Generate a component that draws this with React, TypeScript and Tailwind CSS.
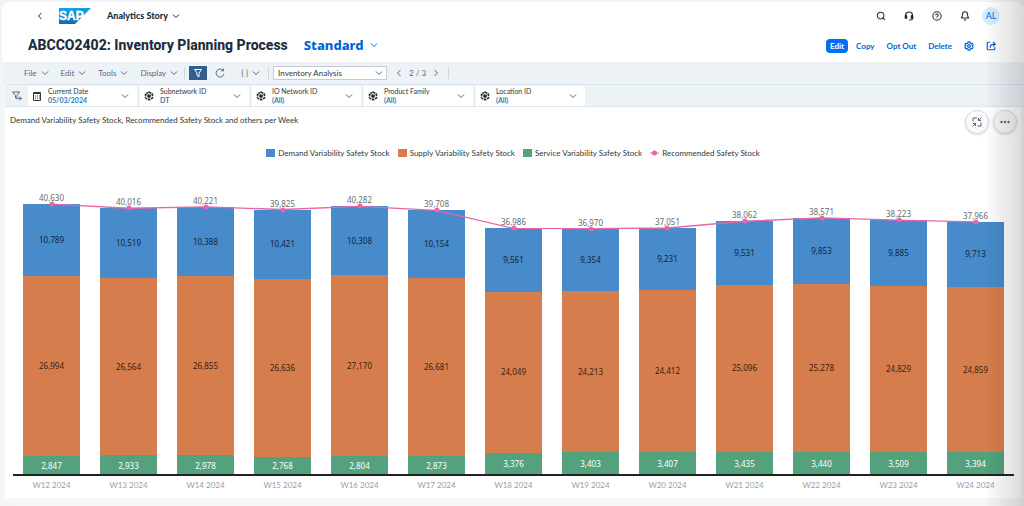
import React, { useState } from 'react';
import { FiSearch, FiBell, FiHelpCircle } from 'react-icons/fi';
import { clsx } from 'clsx';

const weeks = [
  { week: 'W12 2024', demand: 10789, supply: 26994, service: 2847, recommended: 40630 },
  { week: 'W13 2024', demand: 10519, supply: 26564, service: 2933, recommended: 40016 },
  { week: 'W14 2024', demand: 10388, supply: 26855, service: 2978, recommended: 40221 },
  { week: 'W15 2024', demand: 10421, supply: 26636, service: 2768, recommended: 39825 },
  { week: 'W16 2024', demand: 10308, supply: 27170, service: 2804, recommended: 40282 },
  { week: 'W17 2024', demand: 10154, supply: 26681, service: 2873, recommended: 39708 },
  { week: 'W18 2024', demand: 9561, supply: 24049, service: 3376, recommended: 36986 },
  { week: 'W19 2024', demand: 9354, supply: 24213, service: 3403, recommended: 36970 },
  { week: 'W20 2024', demand: 9231, supply: 24412, service: 3407, recommended: 37051 },
  { week: 'W21 2024', demand: 9531, supply: 25096, service: 3435, recommended: 38062 },
  { week: 'W22 2024', demand: 9853, supply: 25278, service: 3440, recommended: 38571 },
  { week: 'W23 2024', demand: 9885, supply: 24829, service: 3509, recommended: 38223 },
  { week: 'W24 2024', demand: 9713, supply: 24859, service: 3394, recommended: 37966 },
];

const filters = [
  { label: 'Current Date', value: '05/03/2024', type: 'date' },
  { label: 'Subnetwork ID', value: 'DT', type: 'dimension' },
  { label: 'IO Network ID', value: '(All)', type: 'dimension' },
  { label: 'Product Family', value: '(All)', type: 'dimension' },
  { label: 'Location ID', value: '(All)', type: 'dimension' },
];

const legend = [
  { label: 'Demand Variability Safety Stock', color: 'bg-[#478bcb]' },
  { label: 'Supply Variability Safety Stock', color: 'bg-[#d67d4e]' },
  { label: 'Service Variability Safety Stock', color: 'bg-[#53a27d]' },
];

const AXIS_MAX = 45150;
const percent = (n: number) => (n / AXIS_MAX) * 100;
const format = (n: number) => n.toLocaleString('en-US');

type IconProps = { className?: string };

const Chevron: React.FC<IconProps> = ({ className }) => (
  <svg viewBox="0 0 8 8" className={clsx('shrink-0 fill-none stroke-current', className)} aria-hidden="true">
    <path d="M1 2.5 4 5.5 7 2.5" />
  </svg>
);

const SapLogo = () => (
  <svg viewBox="0 0 32 16" className="h-4 w-8" role="img" aria-label="SAP">
    <defs>
      <linearGradient id="sap" x1="0" y1="0" x2="0" y2="1">
        <stop offset="0" stopColor="#12a5e6" />
        <stop offset="1" stopColor="#1268bd" />
      </linearGradient>
    </defs>
    <path d="M0 0h32L16 16H0z" fill="url(#sap)" />
    <text x="0" y="12" fontSize="12" fontWeight="700" fill="#fff" stroke="#fff" strokeWidth=".4" fontFamily="Liberation Sans, sans-serif">
      SAP
    </text>
  </svg>
);

const HeadsetIcon = () => (
  <svg viewBox="0 0 10 10" className="size-[10px] fill-none stroke-current stroke-[1.2]" aria-hidden="true">
    <path d="M1.500 6V4.500a3.500 3.500 0 0 1 7 0V7.500Q8.500 9 6.500 9H5" />
    <path d="M1 4.500h2v3H1zM7 4.500h2v3H7z" className="fill-current" strokeWidth=".6" />
  </svg>
);

const GearIcon = () => (
  <svg viewBox="0 0 12 12" className="size-[10px] fill-none stroke-current stroke-[1.4]" aria-hidden="true">
    <path d="M5 1h2l.4 1.400 1.300.7L10 2.800l1 1.800-1 1v.8l1 1-1 1.800-1.300-.3-1.300.7L7 11H5l-.4-1.400-1.300-.7L2 9.200 1 7.400l1-1v-.8l-1-1 1-1.800 1.300.3 1.300-.7z" />
    <circle cx="6" cy="6" r="1.7" />
  </svg>
);

const ShareIcon = () => (
  <svg viewBox="0 0 12 12" className="size-[10px] fill-none stroke-current stroke-[1.4]" aria-hidden="true">
    <path d="M5 1.500H2.500a1 1 0 0 0-1 1v7a1 1 0 0 0 1 1h7a1 1 0 0 0 1-1V7.500" />
    <path d="M5 8c0-2.500 1.500-4 3.500-4H11M8.500 1.200 11.200 4 8.500 6.500" />
  </svg>
);

const FunnelIcon = () => (
  <svg viewBox="0 0 10 10" className="size-[10px] fill-none stroke-current" aria-hidden="true">
    <path d="M1.500 1.500h7L6 5v4L4 7.500V5z" />
  </svg>
);

const AddFilterIcon = () => (
  <svg viewBox="0 0 10 10" className="size-[10px] fill-none stroke-current" aria-hidden="true">
    <path d="M.5 1h7L5 4.500V8L3.500 7V4.500zM8 5.500v4M6 7.500h4" />
  </svg>
);

const RefreshIcon = () => (
  <svg viewBox="0 0 10 10" className="size-[10px] fill-none stroke-current" aria-hidden="true">
    <path d="M8 2.300A4 4 0 1 0 9 6M8.500.5v2.300H6" />
  </svg>
);

const CalendarIcon = () => (
  <svg viewBox="0 0 10 10" className="size-[10px] fill-none stroke-current" aria-hidden="true">
    <path d="M1.500 1.500h7v8h-7zM1 2.500h8" />
    <path d="M3 5h5M3 7.200h5" strokeDasharray="1 1" />
  </svg>
);

const DimensionIcon = () => (
  <svg viewBox="0 0 10 10" className="size-[10px] fill-none stroke-current" aria-hidden="true">
    <path d="M5 1 8.500 3v4L5 9 1.500 7V3z" strokeWidth="1.500" strokeDasharray="2.800 .7" />
    <path d="M5 3.200 6.700 4.200v1.800L5 7 3.300 6V4.200z" className="fill-current" strokeWidth=".3" />
    <path d="M5 5v4M5 5 1.500 3M5 5l3.500-2" strokeWidth=".7" />
  </svg>
);

const CollapseIcon = () => (
  <svg viewBox="0 0 10 10" className="size-[10px] fill-none stroke-current" aria-hidden="true">
    <path d="M5 1H1v3.500M9 5.500V9H5.500M9.500.5 6.500 3.500M6.500 1v2.500H9M.5 9.500l3-3M1 6.500h2.500V9" />
  </svg>
);

const Separator = () => <span className="h-3 w-px bg-[#cfd6dd]" />;

const App: React.FC = () => {
  const [page, setPage] = useState('Inventory Analysis');

  return (
    <div className="relative bg-[#f3f4f6] pt-[2px] pl-[2px] font-[Lato,sans-serif] text-[#32363a]">
      <div className="overflow-hidden rounded-lg bg-[#f4f6f8]">
        {/* Shell header */}
        <header className="bg-white pr-6 pl-[26px]">
          <div className="flex h-7 items-center">
            <button aria-label="Back" className="flex size-6 items-center justify-center text-[#1d2d3e]">
              <Chevron className="size-2 rotate-90" />
            </button>
            <span className="ml-[7px]">
              <SapLogo />
            </span>
            <button className="ml-4 flex items-center gap-1 text-[9px] font-black text-[#1d2d3e]">
              Analytics Story
              <Chevron className="size-2" />
            </button>
            <div className="ml-auto flex items-center gap-[18px] text-[#1d2d3e]">
              <button aria-label="Search"><FiSearch className="size-[10px]" strokeWidth={2.5} /></button>
              <button aria-label="Support"><HeadsetIcon /></button>
              <button aria-label="Help"><FiHelpCircle className="size-[10px]" strokeWidth={2.5} /></button>
              <button aria-label="Notifications"><FiBell className="size-[10px]" strokeWidth={2.5} /></button>
            </div>
            <button className="ml-3 size-[18px] rounded-full bg-[#d1efff] text-[9px] text-[#0064d9]">AL</button>
          </div>

          <div className="flex h-8 items-center">
            <div className="flex items-center gap-4 pb-[3px] leading-5 font-extrabold">
              <h1 className="font-[Roboto,sans-serif] text-[14px] text-[#1d2d3e]">ABCCO2402: Inventory Planning Process</h1>
              <button className="flex items-center gap-[6px] font-['Noto_Sans',sans-serif] text-[13px] text-[#0064d9]">
                Standard
                <Chevron className="size-2" />
              </button>
            </div>
            <div className="ml-auto flex items-center text-[8px] font-bold text-[#0064d9]">
              <button className="h-[14px] w-[22px] rounded bg-[#0070f2] text-white">Edit</button>
              <button className="ml-2">Copy</button>
              <button className="ml-3">Opt Out</button>
              <button className="ml-3">Delete</button>
              <button className="ml-3" aria-label="Settings"><GearIcon /></button>
              <button className="mr-1 ml-3" aria-label="Share"><ShareIcon /></button>
            </div>
          </div>
        </header>

        {/* Toolbar */}
        <div className="flex h-[22px] items-center bg-[#edf2f7] pl-[22px] text-[8px] text-[#556b82]">
          <div className="flex gap-3">
            {['File', 'Edit', 'Tools', 'Display'].map((item) => (
              <button key={item} className="flex items-center gap-1">
                {item}
                <Chevron className="size-2" />
              </button>
            ))}
          </div>
          <div className="ml-[6px] flex items-center gap-1">
            <Separator />
            <button aria-label="Filters" className="flex h-[14px] w-[18px] items-center justify-center bg-[#2f5f8a] text-white">
              <FunnelIcon />
            </button>
          </div>
          <button className="ml-2" aria-label="Refresh"><RefreshIcon /></button>
          <button className="mr-2 ml-4 flex items-center gap-1" aria-label="Scripts">
            {'{ }'}
            <Chevron className="size-2" />
          </button>
          <Separator />
          <div className="relative ml-1 w-[114px]">
            <select
              aria-label="Page"
              className="block h-[14px] w-full appearance-none border border-[#c5ccd3] bg-white pl-1 text-[8px] leading-3 text-[#32363a]"
              value={page}
              onChange={(e) => setPage(e.target.value)}
            >
              <option>Inventory Analysis</option>
            </select>
            <Chevron className="pointer-events-none absolute top-[3px] right-1 size-2" />
          </div>
          <button className="ml-2" aria-label="Previous page"><Chevron className="size-2 rotate-90" /></button>
          <span className="mx-[6px]">2 / 3</span>
          <button className="mr-2" aria-label="Next page"><Chevron className="size-2 -rotate-90" /></button>
          <Separator />
        </div>

        {/* Filter bar */}
        <div className="ml-[3px] flex h-[23px] items-center gap-[3px] border-y border-[#dce6f0] bg-[#edf2f7] text-[#556b82]">
          <button aria-label="Add filter" className="flex w-5 justify-center pl-1"><AddFilterIcon /></button>
          {filters.map((filter) => (
            <button key={filter.label} className="flex h-5 w-[109px] items-center bg-white px-1 text-left">
              <span className="text-[#32363a]">
                {filter.type === 'date' ? <CalendarIcon /> : <DimensionIcon />}
              </span>
              <span className="ml-[6px] flex-1 text-[7px] leading-[9px]">
                <span className="block text-[#32363a]">{filter.label}</span>
                <span className="block font-bold text-[#2f7ab5]">{filter.value}</span>
              </span>
              <Chevron className="mr-1 size-2" />
            </button>
          ))}
        </div>

        {/* Chart */}
        <main className="mr-[3px] mb-2 ml-[3px] bg-white px-1 pb-[5px]">
          <div className="flex h-8 items-start justify-between">
            <h2 className="pt-[7px] pl-px text-[8px] leading-3">
              Demand Variability Safety Stock, Recommended Safety Stock and others per Week
            </h2>
            <div className="flex gap-1 pt-[3px] text-[#556b82]">
              <button aria-label="Collapse" className="flex size-6 items-center justify-center rounded-full border border-[#d9d9d9] bg-[#fafafa] shadow-sm">
                <CollapseIcon />
              </button>
              <button aria-label="More" className="flex size-6 items-center justify-center rounded-full border border-[#d9d9d9] bg-[#f5f5f5] shadow-sm">
                <svg viewBox="0 0 10 4" className="h-1 w-[10px] fill-current">
                  <circle cx="1.5" cy="2" r="1.2" />
                  <circle cx="5" cy="2" r="1.2" />
                  <circle cx="8.5" cy="2" r="1.2" />
                </svg>
              </button>
            </div>
          </div>

          <div className="mt-2 flex h-3 items-center justify-center gap-2 text-[8px]">
            {legend.map((item) => (
              <div key={item.label} className="flex items-center gap-[3px]">
                <span className={clsx('h-2 w-[9px]', item.color)} />
                {item.label}
              </div>
            ))}
            <div className="flex items-center gap-[3px]">
              <svg viewBox="0 0 9 6" className="h-[6px] w-[9px] fill-[#e865ac]">
                <path d="M0 2.500h9v1H0z" />
                <circle cx="4.5" cy="3" r="2.500" />
              </svg>
              Recommended Safety Stock
            </div>
          </div>

          <div className="relative mt-[15px] mr-[3px] ml-1 grid h-[301px] grid-cols-13 font-['Noto_Sans',sans-serif] text-[8px] leading-none">
            {weeks.map((w) => (
              <div key={w.week} className="flex h-full flex-col items-center justify-end">
                <div className="flex w-3/4 items-center justify-center bg-[#478bcb] text-[#12263a]" style={{ height: `${percent(w.demand)}%` }}>
                  {format(w.demand)}
                </div>
                <div className="flex w-3/4 items-center justify-center bg-[#d67d4e] text-[#3a1f10]" style={{ height: `${percent(w.supply)}%` }}>
                  {format(w.supply)}
                </div>
                <div className="flex w-3/4 items-center justify-center bg-[#53a27d] pt-px text-white" style={{ height: `${percent(w.service)}%` }}>
                  {format(w.service)}
                </div>
              </div>
            ))}
            {weeks.map((w, i) => (
              <span
                key={w.week}
                className="absolute -translate-x-1/2 pb-[2px] text-[#6a6d70]"
                style={{ left: `${((i + 0.5) / weeks.length) * 100}%`, bottom: `${percent(w.recommended)}%` }}
              >
                {format(w.recommended)}
              </span>
            ))}
            <svg
              viewBox={`0 0 ${weeks.length} ${AXIS_MAX}`}
              preserveAspectRatio="none"
              className="absolute inset-0 size-full fill-none stroke-[#e865ac]"
            >
              <polyline
                points={weeks.map((w, i) => `${i + 0.5},${AXIS_MAX - w.recommended}`).join(' ')}
                strokeWidth="1.3"
                vectorEffect="non-scaling-stroke"
              />
            </svg>
            {weeks.map((w, i) => (
              <span
                key={w.week}
                className="absolute size-[5px] -translate-x-1/2 translate-y-1/2 rounded-full bg-[#e865ac]"
                style={{ left: `${((i + 0.5) / weeks.length) * 100}%`, bottom: `${percent(w.recommended)}%` }}
              />
            ))}
          </div>
          {/* Axis */}
          <div className="relative -mt-px mr-[3px] ml-1 grid h-[19px] grid-cols-13 items-center border-t-2 border-[#222] text-center text-[8px] text-[#9a9da0]">
            {weeks.map((w) => (
              <span key={w.week}>{w.week}</span>
            ))}
          </div>
        </main>
      </div>
      <div className="pointer-events-none absolute inset-y-0 right-0 w-10 bg-linear-to-r from-transparent to-black/15" />
    </div>
  );
};

export default App;
